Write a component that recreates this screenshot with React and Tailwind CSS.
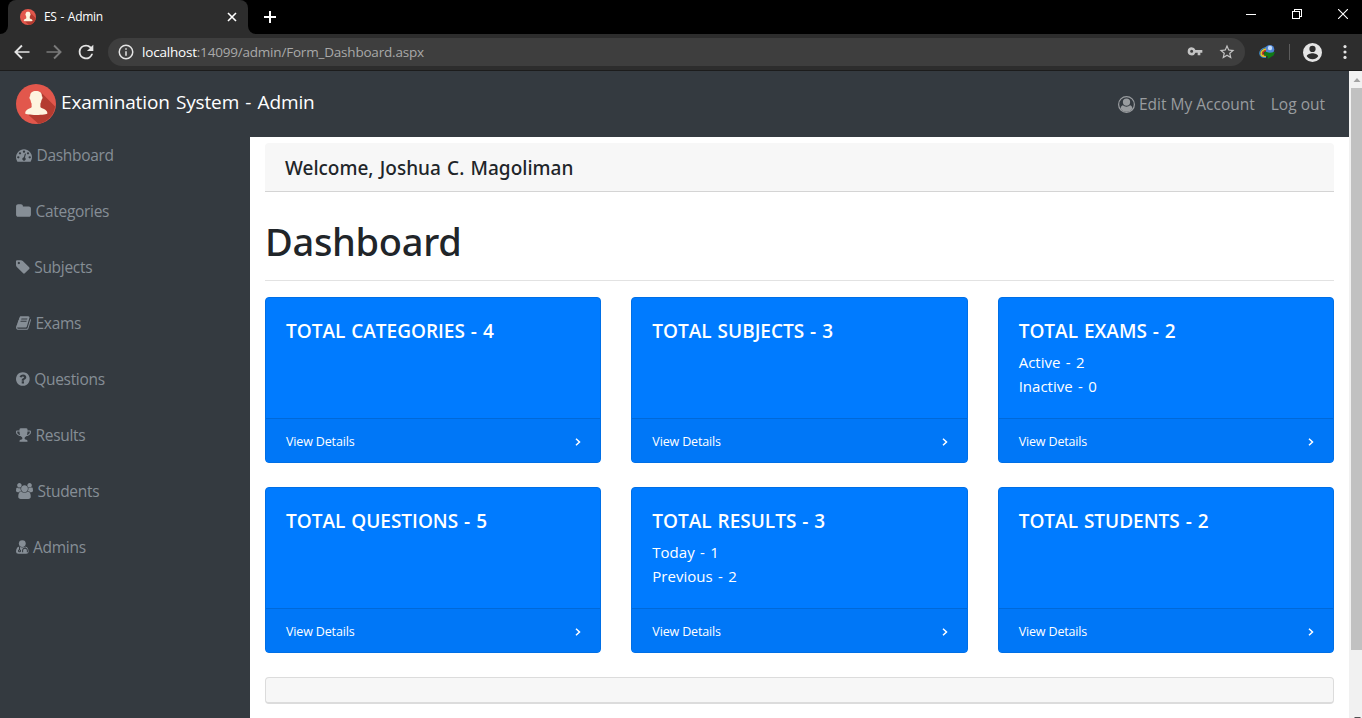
import React from "react";

function Glyph({ x = 0, w = 1792, className = "", children }) {
  return (
    <svg viewBox={`${x} 0 ${w} 1792`} className={`mb-[2px] h-4 shrink-0 fill-current ${className}`}>
      {children}
    </svg>
  );
}

const Tachometer = () => (
  <Glyph className="w-4">
    <path d="M384 1152q0-53-37.5-90.5t-90.5-37.5-90.5 37.5-37.5 90.5 37.5 90.5 90.5 37.5 90.5-37.5 37.5-90.5zm192-448q0-53-37.5-90.5t-90.5-37.5-90.5 37.5-37.5 90.5 37.5 90.5 90.5 37.5 90.5-37.5 37.5-90.5zm428 481l101-382q6-26-7.5-48.5t-38.5-29.5-48 6.5-30 39.5l-101 382q-60 5-107 43.5t-63 98.5q-20 77 20 146t117 89 146-20 89-117q16-60-6-117t-72-91zm660-33q0-53-37.5-90.5t-90.5-37.5-90.5 37.5-37.5 90.5 37.5 90.5 90.5 37.5 90.5-37.5 37.5-90.5zm-640-640q0-53-37.5-90.5t-90.5-37.5-90.5 37.5-37.5 90.5 37.5 90.5 90.5 37.5 90.5-37.5 37.5-90.5zm448 192q0-53-37.5-90.5t-90.5-37.5-90.5 37.5-37.5 90.5 37.5 90.5 90.5 37.5 90.5-37.5 37.5-90.5zm320 448q0 261-141 483-19 29-54 29h-1402q-35 0-54-29-141-221-141-483 0-182 71-348t191-286 286-191 348-71 348 71 286 191 191 286 71 348z" />
  </Glyph>
);
const Folder = () => (
  <Glyph x={64} w={1664} className="w-[15px]">
    <path d="M1728 608v704q0 92-66 158t-158 66h-1216q-92 0-158-66t-66-158v-960q0-92 66-158t158-66h320q92 0 158 66t66 158v32h672q92 0 158 66t66 158z" />
  </Glyph>
);
const Tag = () => (
  <Glyph x={128} w={1536} className="w-[13.7px]">
    <path d="M576 448q0-53-37.5-90.5t-90.5-37.5-90.5 37.5-37.5 90.5 37.5 90.5 90.5 37.5 90.5-37.5 37.5-90.5zm1067 576q0 53-37 90l-491 492q-39 37-91 37-53 0-90-37l-715-716q-38-37-64.5-101t-26.5-117v-416q0-52 38-90t90-38h416q53 0 117 26.5t102 64.5l715 714q37 39 37 91z" />
  </Glyph>
);
const Book = () => (
  <Glyph x={64} w={1664} className="w-[15px]">
    <path d="M1703 478q40 57 18 129l-275 906q-19 64-76.5 107.5t-122.5 43.5h-923q-77 0-148.5-53.5t-99.5-131.5q-24-67-2-127 0-4 3-27t4-37q1-8-3-21.5t-3-19.5q2-11 8-21t16.5-23.5 16.5-23.5q23-38 45-91.5t30-91.5q3-10 .5-30t-.5-28q3-11 17-28t17-23q21-36 42-92t25-90q1-9-2.5-32t.5-28q4-13 22-30.5t22-22.5q19-26 42.5-84.5t27.5-96.5q1-8-3-25.5t-2-26.5q2-8 9-18t18-23 17-21q8-12 16.5-30.5t15-35 16-36 19.5-32 26.5-23.5 36-11.5 47.5 5.5l-1 3q38-9 51-9h761q74 0 114 56t18 130l-274 906q-36 119-71.5 153.5t-128.5 34.5h-869q-27 0-38 15-11 16-1 43 24 70 144 70h923q29 0 56-15.5t35-41.5l300-987q7-22 5-57 38 15 59 43zm-1064 2q-4 13 2 22.5t20 9.5h608q13 0 25.5-9.5t16.5-22.5l21-64q4-13-2-22.5t-20-9.5h-608q-13 0-25.5 9.5t-16.5 22.5zm-83 256q-4 13 2 22.5t20 9.5h608q13 0 25.5-9.5t16.5-22.5l21-64q4-13-2-22.5t-20-9.5h-608q-13 0-25.5 9.5t-16.5 22.5z" />
  </Glyph>
);
const Question = () => (
  <Glyph x={128} w={1536} className="w-[13.7px]">
    <path d="M1024 1376v-192q0-14-9-23t-23-9h-192q-14 0-23 9t-9 23v192q0 14 9 23t23 9h192q14 0 23-9t9-23zm256-672q0-88-55.5-163t-138.5-116-170-41q-243 0-371 213-15 24 8 42l132 100q7 6 19 6 16 0 25-12 53-68 86-92 34-24 86-24 48 0 85.5 26t37.5 59q0 38-20 61t-68 45q-63 28-115.5 86.5t-52.5 125.5v36q0 14 9 23t23 9h192q14 0 23-9t9-23q0-19 21.5-49.5t54.5-49.5q32-18 49-28.5t46-35 44.5-48 28-60.5 12.5-81zm384 192q0 209-103 385.5t-279.5 279.5-385.5 103-385.5-103-279.5-279.5-103-385.5 103-385.5 279.5-279.5 385.5-103 385.5 103 279.5 279.5 103 385.5z" />
  </Glyph>
);
const Trophy = () => (
  <Glyph x={64} w={1664} className="w-[15px]">
    <path d="M522 883q-74-162-74-371h-256v96q0 78 94.5 162t235.5 113zm1078-275v-96h-256q0 209-74 371 141-29 235.5-113t94.5-162zm128-128v128q0 71-41.5 143t-112 130-173 97.5-215.5 44.5q-42 54-95 95-38 34-52.5 72.5t-14.5 89.5q0 54 30.5 91t97.5 37q75 0 133.5 45.5t58.5 114.5v64q0 14-9 23t-23 9h-832q-14 0-23-9t-9-23v-64q0-69 58.5-114.5t133.5-45.5q67 0 97.5-37t30.5-91q0-51-14.5-89.5t-52.5-72.5q-53-41-95-95-113-5-215.5-44.5t-173-97.5-112-130-41.5-143v-128q0-40 28-68t68-28h288v-96q0-66 47-113t113-47h576q66 0 113 47t47 113v96h288q40 0 68 28t28 68z" />
  </Glyph>
);
const Users = () => (
  <Glyph w={1920} className="w-[17px]">
    <path d="M593 896q-162 5-265 128h-134q-82 0-138-40.5t-56-118.5q0-353 124-353 6 0 43.5 21t97.5 42.5 119 21.5q67 0 133-23-5 37-5 66 0 159 81 295zm1071 637q0 120-73 189.5t-194 69.5h-874q-121 0-194-69.5t-73-189.5q0-53 3.5-103.5t14-109 26.5-108.5 43-97.5 62-81 85.5-53.5 111.5-20q10 0 43 21.5t73 48 107 48 135 21.5 135-21.5 107-48 73-48 43-21.5q61 0 111.5 20t85.5 53.5 62 81 43 97.5 26.5 108.5 14 109 3.5 103.5zm-1024-1277q0 106-75 181t-181 75-181-75-75-181 75-181 181-75 181 75 75 181zm704 384q0 159-112.5 271.5t-271.5 112.5-271.5-112.5-112.5-271.5 112.5-271.5 271.5-112.5 271.5 112.5 112.5 271.5zm576 225q0 78-56 118.5t-138 40.5h-134q-103-123-265-128 81-136 81-295 0-29-5-66 66 23 133 23 59 0 119-21.5t97.5-42.5 43.5-21q124 0 124 353zm-128-609q0 106-75 181t-181 75-181-75-75-181 75-181 181-75 181 75 75 181z" />
  </Glyph>
);
const Doctor = () => (
  <Glyph x={0} w={1408} className="w-[12.6px]">
    <circle cx="704" cy="512" r="384" />
    <path d="M380 832q-260 40-330 290-50 160-50 300 0 242 266 242h876q266 0 266-242 0-140-50-300-70-250-330-290-140 130-324 130t-324-130z" />
    <g className="fill-none stroke-[#343a40]" strokeWidth="115">
      <path d="M395 830v400M1010 830v180M740 1480v-210q0-150 130-210 140-60 270 0 130 60 130 210v210" />
      <circle cx="395" cy="1320" r="115" />
    </g>
  </Glyph>
);

function Avatar({ className }) {
  return (
    <svg viewBox="0 0 40 40" className={className}>
      <circle cx="20" cy="20" r="20" fill="#e2574c" />
      <path d="M25.2 8.5 39.1 22.4A20 20 0 0 1 22.5 39.8L10.8 29.6z" fill="#b43b30" />
      <path d="M20 7c3.600 0 6 1.600 5.900 5.200 1 .3.800 2.800-.3 3.500-.5 2.500-1 3.400-1.200 3.900v3.400c.4 1.400 7 2.200 7 6.200 0 1.300-5.200 1.700-11.200 1.700S9.200 30.500 9.200 29.200c0-4 6-4.800 6.400-6.200v-3.400c-.2-.5-.7-1.400-1.200-3.900-1.100-.7-1.300-3.200-.3-3.500C14.100 8.600 16.400 7 20 7z" fill="#fef4df" />
    </svg>
  );
}

const NAV = [
  ["Dashboard", Tachometer],
  ["Categories", Folder],
  ["Subjects", Tag],
  ["Exams", Book],
  ["Questions", Question],
  ["Results", Trophy],
  ["Students", Users],
  ["Admins", Doctor],
];

const CARDS = [
  { title: "TOTAL CATEGORIES - 4", lines: [] },
  { title: "TOTAL SUBJECTS - 3", lines: [] },
  { title: "TOTAL EXAMS - 2", lines: ["Active - 2", "Inactive - 0"] },
  { title: "TOTAL QUESTIONS - 5", lines: [] },
  { title: "TOTAL RESULTS - 3", lines: ["Today - 1", "Previous - 2"] },
  { title: "TOTAL STUDENTS - 2", lines: [] },
];

function TabStrip() {
  return (
    <div className="flex h-[34px] shrink-0 bg-black text-white">
      <div className="flex w-2 items-end bg-[#2d2d2d]">
        <div className="h-full w-2 rounded-br-lg bg-black" />
      </div>
      <div className="flex w-60 bg-black">
        <div className="flex w-60 items-center rounded-t-lg bg-[#2d2d2d] pl-3 pr-[11px]">
          <Avatar className="size-4" />
          <span className="ml-2 flex-1 text-[12px] tracking-[-0.3px] [word-spacing:1px]">ES - Admin</span>
          <svg viewBox="0 0 10 10" className="size-[10px] fill-none stroke-white" strokeWidth="1.6">
            <path d="M1 1l8 8M9 1l-8 8" />
          </svg>
        </div>
      </div>
      <div className="w-2 bg-[#2d2d2d]">
        <div className="h-full w-2 rounded-bl-lg bg-black" />
      </div>
      <svg viewBox="0 0 14 14" className="ml-[7px] mt-[10px] size-[14px] fill-none stroke-white" strokeWidth="2">
        <path d="M7 1v12M1 7h12" />
      </svg>
      <div className="ml-auto flex gap-9 pr-[14px] pt-[9px]">
        <svg viewBox="0 0 10 10" className="size-[10px] fill-none stroke-white" shapeRendering="crispEdges">
          <path d="M0 5.500h10" />
        </svg>
        <svg viewBox="0 0 10 10" className="size-[10px] fill-none stroke-white" shapeRendering="crispEdges">
          <path d="M.5 2.500h7v7h-7zM2.500 2.500v-2h7v7h-2" />
        </svg>
        <svg viewBox="0 0 10 10" className="size-[10px] fill-none stroke-white" strokeWidth="1.1">
          <path d="M0 0l10 10M10 0L0 10" />
        </svg>
      </div>
    </div>
  );
}

function Toolbar() {
  return (
    <div className="flex h-[37px] shrink-0 items-center border-b border-[#1c1c1c] bg-[#2d2d2d] pl-[10px] pr-[7px] text-[#e4e4e4]">
      <svg viewBox="0 0 24 24" className="size-6 fill-[#e4e4e4] p-[3px]">
        <path d="M22 10.900H6.100l6.700-6.700L11 2.400 1.500 12l9.500 9.600 1.800-1.800-6.700-6.700H22z" />
      </svg>
      <svg viewBox="0 0 24 24" className="ml-2 size-6 fill-[#7a7a7a] p-[3px]">
        <path d="M2 10.900h15.900l-6.700-6.700L13 2.400l9.500 9.600-9.500 9.600-1.800-1.800 6.700-6.700H2z" />
      </svg>
      <svg viewBox="0 0 24 24" className="ml-2 size-6 fill-[#e4e4e4] p-[1px]">
        <path d="M17.650 6.350A7.960 7.960 0 0 0 12 4a8 8 0 1 0 7.730 10h-2.080A6 6 0 1 1 12 6c1.660 0 3.140.69 4.220 1.780L13 11h7V4z" />
      </svg>
      <div className="ml-[10px] flex h-7 flex-1 items-center rounded-full bg-[#3e3e3e] pl-[9px] pr-[9px]">
        <svg viewBox="0 0 24 24" className="size-[18px] fill-[#e4e4e4]">
          <path d="M11 17h2v-6h-2v6zm1-15a10 10 0 1 0 0 20 10 10 0 0 0 0-20zm0 18a8 8 0 1 1 0-16 8 8 0 0 1 0 16zM11 9h2V7h-2v2z" />
        </svg>
        <span className="ml-[7px] text-[13.5px] tracking-[-0.2px] text-[#a9a9a9]">
          <span className="text-white">localhost</span>:14099/admin/Form_Dashboard.aspx
        </span>
        <svg viewBox="0 0 24 24" className="ml-auto size-4 fill-[#c4c4c4]">
          <path d="M12.650 9A5.990 5.990 0 0 0 7 5a6 6 0 1 0 5.650 8H16v4h4v-4h3V9zM7 13.300a2.300 2.300 0 1 1 0-4.600 2.300 2.300 0 0 1 0 4.600z" />
        </svg>
        <svg viewBox="0 0 24 24" className="ml-[15px] size-[18px] fill-[#c4c4c4]">
          <path d="M22 9.240l-7.190-.62L12 2 9.190 8.630 2 9.240l5.460 4.730L5.820 21 12 17.270 18.180 21l-1.630-7.030zM12 15.400l-3.760 2.270 1-4.280-3.320-2.880 4.380-.38L12 6.100l1.710 4.040 4.380.38-3.320 2.880 1 4.280z" />
        </svg>
      </div>
      <svg viewBox="0 0 16 14" className="ml-[14px] h-[14px] w-4">
        <circle cx="10.800" cy="4.500" r="4.500" fill="#4f86d8" />
        <circle cx="11" cy="3" r="2.200" fill="#c3dbf8" />
        <path d="M7 2.500C3 3.500.6 6 .8 8.700c.3 2.600 3 4 6.200 3.600" fill="none" stroke="#3a8fd0" strokeWidth="1.200" />
        <path d="M7 4C3.800 4.700 1.800 7 2.200 9c.4 1.700 2.500 2.400 4.800 2" fill="none" stroke="#e6c52e" strokeWidth="1.700" />
        <path d="M7 5.300C5 6 3.400 7.300 3.600 8.500s1.700 1.500 3.400 1.300" fill="none" stroke="#c93a2a" strokeWidth="1.300" />
        <path d="M5.500 6.500l5 1.200L16 7l-1.500 3.500-6 3.500.3-2.800-3.800-.7z" fill="#107a16" />
      </svg>
      <div className="ml-[14px] h-4 w-px bg-[#5c5c5c]" />
      <svg viewBox="2 2 20 20" className="ml-[13px] size-[19px] fill-[#e4e4e4]">
        <path d="M12 2a10 10 0 1 0 0 20 10 10 0 0 0 0-20zm0 3a3.300 3.300 0 1 1 0 6.600A3.300 3.300 0 0 1 12 5zm0 14.200a7.200 7.200 0 0 1-6-3.220c.03-1.990 4-3.080 6-3.080s5.970 1.090 6 3.080a7.200 7.200 0 0 1-6 3.220z" />
      </svg>
      <svg viewBox="0 0 24 24" className="ml-[13px] size-[20px] fill-[#e4e4e4]">
        <circle cx="12" cy="5.500" r="1.900" />
        <circle cx="12" cy="12" r="1.900" />
        <circle cx="12" cy="18.500" r="1.900" />
      </svg>
    </div>
  );
}

function StatCard({ title, lines }) {
  return (
    <div className="flex h-[166px] flex-col rounded border border-[#006fe6] bg-[#007bff] text-white">
      <div className="flex-1 px-5 pt-[21px]">
        <h5 className="mb-[7px] text-[19px] font-semibold leading-6 [word-spacing:1px]">{title}</h5>
        {lines.map((line) => (
          <div key={line} className="text-[15px] leading-6 [word-spacing:1.5px]">{line}</div>
        ))}
      </div>
      <div className="flex h-[44px] items-center justify-between border-t border-[#0069d9] bg-[#0077f7] pl-5 pr-[18px] pt-[2px] text-[12.5px]">
        <span className="pt-[2px] tracking-[-0.15px]">View Details</span>
        <svg viewBox="0 0 6 8" className="mr-px h-2 w-[6px] fill-none stroke-white" strokeWidth="1.500">
          <path d="M1 .7L4.500 4 1 7.300" />
        </svg>
      </div>
    </div>
  );
}

export default function App() {
  return (
    <div className="flex h-[718px] w-[1362px] flex-col overflow-hidden bg-white font-['Open_Sans',sans-serif] text-[#212529]">
      <TabStrip />
      <Toolbar />
      <div className="flex min-h-0 flex-1">
        <div className="flex min-w-0 flex-1 flex-col">
          <header className="flex h-[66px] shrink-0 items-center bg-[#343a40] pl-4 pr-6">
            <Avatar className="size-10" />
            <span className="-mt-[3px] ml-[5px] text-[19px] tracking-[-0.15px] text-white [word-spacing:1.500px]">Examination System - Admin</span>
            <nav className="ml-auto flex items-center gap-4 pt-[2px] text-[15.500px] text-[#999c9f]">
              <span className="flex items-center gap-1">
                <svg viewBox="0 0 1792 1792" className="-ml-px mb-px size-[17px] fill-current">
                  <circle cx="896" cy="896" r="832" fill="none" stroke="currentColor" strokeWidth="128" />
                  <circle cx="896" cy="640" r="384" />
                  <path d="M1523 1339q-22-155-87.500-257.500t-184.500-118.500q-67 74-159.500 115.500t-195.500 41.500-195.500-41.500-159.500-115.500q-119 16-184.500 118.500t-87.500 257.500q106 150 271 237.500t356 87.500 356-87.500 271-237.500z" />
                </svg>
                <span>Edit My Account</span>
              </span>
              <span>Log out</span>
            </nav>
          </header>
          <div className="flex min-h-0 flex-1">
            <aside className="flex w-[250px] shrink-0 flex-col bg-[#343a40] pt-[7px] text-[15.500px] text-[#868e96]">
              {NAV.map(([label, Icon]) => (
                <div key={label} className="mb-8 flex h-6 items-center gap-[4.500px] pl-4">
                  <Icon />
                  <span className="tracking-[-0.3px]">{label}</span>
                </div>
              ))}
            </aside>
            <main className="flex min-w-0 flex-1 flex-col px-[15px] pt-[6px]">
              <div className="flex h-[49px] shrink-0 items-center rounded-t border-b border-[#d4d4d4] bg-[#f7f7f7] pl-5 pt-[2px] font-['Noto_Sans'] text-[19px] font-medium [word-spacing:1.300px]">
                Welcome, Joshua C. Magoliman
              </div>
              <h1 className="mb-px mt-[25px] h-12 shrink-0 font-['Noto_Sans'] text-[38px] font-medium leading-[48px] tracking-[-0.3px]">Dashboard</h1>
              <hr className="mt-[14px] shrink-0 border-t border-[#e2e2e2]" />
              <div className="mt-4 grid grid-cols-3 gap-x-[30px] gap-y-6">
                {CARDS.map((c) => (
                  <StatCard key={c.title} {...c} />
                ))}
              </div>
              <div className="mt-6 h-[27px] shrink-0 rounded border border-b-2 border-[#dcdcdc] bg-[#f7f7f7]" />
            </main>
          </div>
        </div>
        <div className="flex w-[13px] shrink-0 flex-col bg-[#f1f1f1] pl-[2px]">
          <svg viewBox="0 0 11 17" className="h-[17px] w-[11px] fill-[#a3a3a3]">
            <path d="M2.500 11h7L6 7z" />
          </svg>
          <div className="h-[562px] bg-[#c1c1c1]" />
          <svg viewBox="0 0 11 68" className="h-[68px] w-[11px] fill-[#505050]">
            <path d="M3 67h7l-1 1H4z" />
          </svg>
        </div>
      </div>
    </div>
  );
}
